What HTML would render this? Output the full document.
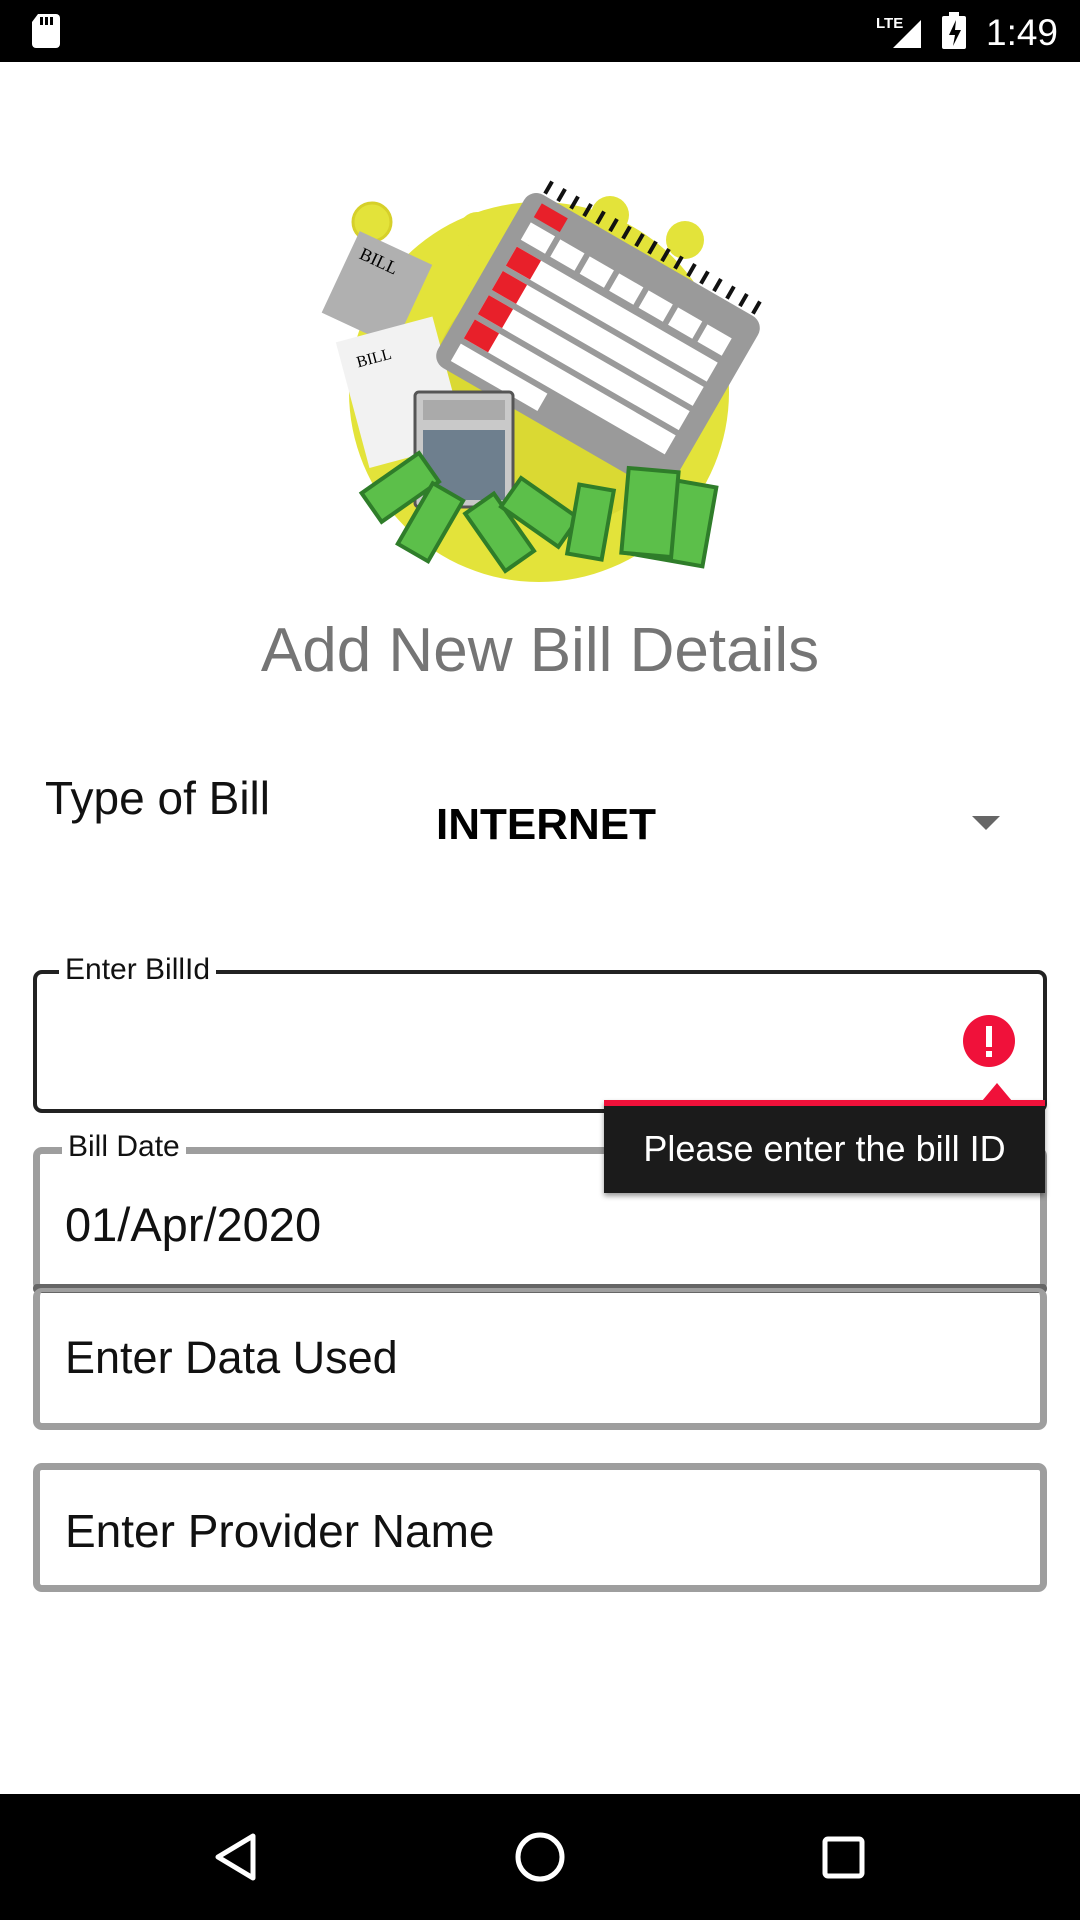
<!DOCTYPE html>
<html><head><meta charset="utf-8"><style>
*{margin:0;padding:0;box-sizing:border-box}
body{width:1080px;height:1920px;background:#fff;position:relative;overflow:hidden;font-family:"Liberation Sans",Roboto,sans-serif}
.abs{position:absolute}
.box{position:absolute;left:33px;width:1014px;border-radius:9px}
.lbl{position:absolute;left:22px;top:-21px;background:#fff;padding:0 6px;font-size:30px;color:#111;line-height:34px}
</style></head><body>
<div class="abs" style="left:0;top:0;width:1080px;height:62px;background:#000"></div>
<svg class="abs" style="left:0;top:0" width="1080" height="62">
<path d="M38 14h18a4 4 0 0 1 4 4v26a4 4 0 0 1-4 4H36a4 4 0 0 1-4-4V22z" fill="#fff"/>
<rect x="40" y="17" width="3" height="8" fill="#000"/><rect x="45" y="17" width="3" height="8" fill="#000"/><rect x="50" y="17" width="3" height="8" fill="#000"/>
<polygon points="921,48 921,20 893,48" fill="#fff"/>
<text x="876" y="28" fill="#fff" font-size="15" font-weight="bold" font-family="Liberation Sans">LTE</text>
<rect x="942" y="16" width="24" height="33" rx="2" fill="#fff"/><rect x="949" y="12" width="10" height="5" fill="#fff"/>
<path d="M956 20l-7 15h6l-2 11 8-16h-6z" fill="#000"/>
<text x="986" y="45" fill="#fff" font-size="37" font-family="Liberation Sans">1:49</text>
</svg>

<svg class="abs" style="left:300px;top:150px" width="480" height="460" viewBox="300 150 480 460">
<circle cx="539" cy="392" r="190" fill="#e3e33a"/>
<circle cx="560" cy="395" r="130" fill="#d4d22e" opacity=".6"/>
<circle cx="372" cy="222" r="19" fill="#e3e33a" stroke="#d6d02a" stroke-width="3"/>
<circle cx="477" cy="230" r="18" fill="#e3e33a"/>
<circle cx="610" cy="215" r="19" fill="#e3e33a"/>
<circle cx="685" cy="240" r="19" fill="#e3e33a"/>
<g transform="rotate(25 370 280)"><rect x="340" y="240" width="80" height="90" fill="#b0b0b0"/><text x="350" y="265" font-size="18" font-family="Liberation Serif">BILL</text></g>
<g transform="rotate(-15 390 390)"><rect x="350" y="330" width="100" height="130" fill="#f2f2f2"/><text x="365" y="360" font-size="16" font-family="Liberation Serif">BILL</text></g>
<g transform="translate(598 342) rotate(30)">
<rect x="-135" y="-100" width="270" height="200" rx="14" fill="#9a9a9a"/>
<g fill="#fff">
<rect x="-118" y="-70" width="28" height="20"/><rect x="-84" y="-70" width="28" height="20"/><rect x="-50" y="-70" width="28" height="20"/><rect x="-16" y="-70" width="28" height="20"/><rect x="18" y="-70" width="28" height="20"/><rect x="52" y="-70" width="28" height="20"/><rect x="86" y="-70" width="28" height="20"/>
<rect x="-118" y="-42" width="232" height="22"/><rect x="-118" y="-14" width="232" height="22"/><rect x="-118" y="14" width="232" height="22"/><rect x="-118" y="42" width="232" height="22"/><rect x="-118" y="70" width="100" height="20"/>
</g>
<g fill="#e8202a"><rect x="-118" y="-92" width="30" height="16"/><rect x="-118" y="-42" width="28" height="22"/><rect x="-118" y="-14" width="28" height="22"/><rect x="-118" y="14" width="28" height="22"/><rect x="-118" y="42" width="28" height="22"/></g>
<g stroke="#111" stroke-width="4"><path d="M-120 -102v-14M-105 -102v-14M-90 -102v-14M-75 -102v-14M-60 -102v-14M-45 -102v-14M-30 -102v-14M-15 -102v-14M0 -102v-14M15 -102v-14M30 -102v-14M45 -102v-14M60 -102v-14M75 -102v-14M90 -102v-14M105 -102v-14M120 -102v-14"/></g>
</g>
<rect x="415" y="392" width="98" height="115" rx="4" fill="#c9c9c9" stroke="#555" stroke-width="3"/>
<rect x="423" y="400" width="82" height="20" fill="#aaa"/>
<rect x="423" y="430" width="82" height="70" fill="#6e7f8e"/>
<g fill="#5cbf4a" stroke="#2f7d2a" stroke-width="4">
<rect x="365" y="470" width="70" height="35" transform="rotate(-35 400 487)"/>
<rect x="395" y="505" width="70" height="35" transform="rotate(-60 430 522)"/>
<rect x="465" y="515" width="70" height="35" transform="rotate(55 500 532)"/>
<rect x="505" y="495" width="70" height="35" transform="rotate(35 540 512)"/>
<rect x="555" y="505" width="70" height="35" transform="rotate(-80 590 522)"/>
<rect x="630" y="480" width="80" height="80" transform="rotate(10 670 520)"/>
<rect x="625" y="470" width="50" height="85" transform="rotate(5 650 512)"/>
</g>
</svg>

<div class="abs" style="left:0;width:1080px;top:615px;text-align:center;font-size:62px;color:#757575">Add New Bill Details</div>
<div class="abs" style="left:45px;top:771px;font-size:46px;color:#111">Type of Bill</div>
<div class="abs" style="left:436px;top:800px;font-size:44px;font-weight:bold;color:#000">INTERNET</div>
<svg class="abs" style="left:972px;top:816px" width="28" height="16"><polygon points="0,0 28,0 14,14" fill="#666"/></svg>

<div class="box" style="top:970px;height:143px;border:4px solid #222"><div class="lbl">Enter BillId</div></div>
<svg class="abs" style="left:962px;top:1015px" width="54" height="54"><circle cx="27" cy="26" r="26" fill="#f0113a"/><rect x="24" y="11" width="6" height="21" fill="#fff"/><rect x="24" y="36" width="6" height="6" fill="#fff"/></svg>

<div class="box" style="top:1147px;height:145px;border:7px solid #9e9e9e"><div class="lbl" style="top:-24px">Bill Date</div>
<div class="abs" style="left:25px;top:43px;font-size:47px;color:#111">01/Apr/2020</div></div>
<div class="abs" style="left:33px;top:1284px;width:1014px;height:9px;background:#666;border-radius:4px"></div>
<div class="box" style="top:1288px;height:142px;border:7px solid #9e9e9e;border-top-width:4px"><div class="abs" style="left:25px;top:40px;font-size:45px;color:#111">Enter Data Used</div></div>
<div class="box" style="top:1463px;height:129px;border:7px solid #9e9e9e"><div class="abs" style="left:25px;top:34px;font-size:46px;color:#111">Enter Provider Name</div></div>

<div class="abs" style="left:604px;top:1100px;width:441px;height:93px;background:#1b1b1b;box-shadow:0 3px 5px rgba(0,0,0,.4)">
<div style="height:6px;background:#f0113a"></div>
<div style="color:#fff;font-size:36px;text-align:center;padding-top:22px">Please enter the bill ID</div></div>
<svg class="abs" style="left:982px;top:1083px" width="30" height="18"><polygon points="15,0 30,18 0,18" fill="#f0113a"/></svg>

<div class="abs" style="left:0;top:1794px;width:1080px;height:126px;background:#000"></div>
<svg class="abs" style="left:0;top:1794px" width="1080" height="126">
<polygon points="253,42 253,84 218,63" fill="none" stroke="#fff" stroke-width="5" stroke-linejoin="round"/>
<circle cx="540" cy="63" r="22" fill="none" stroke="#fff" stroke-width="5"/>
<rect x="825" y="45" width="37" height="37" rx="3" fill="none" stroke="#fff" stroke-width="5"/>
</svg>
</body></html>
